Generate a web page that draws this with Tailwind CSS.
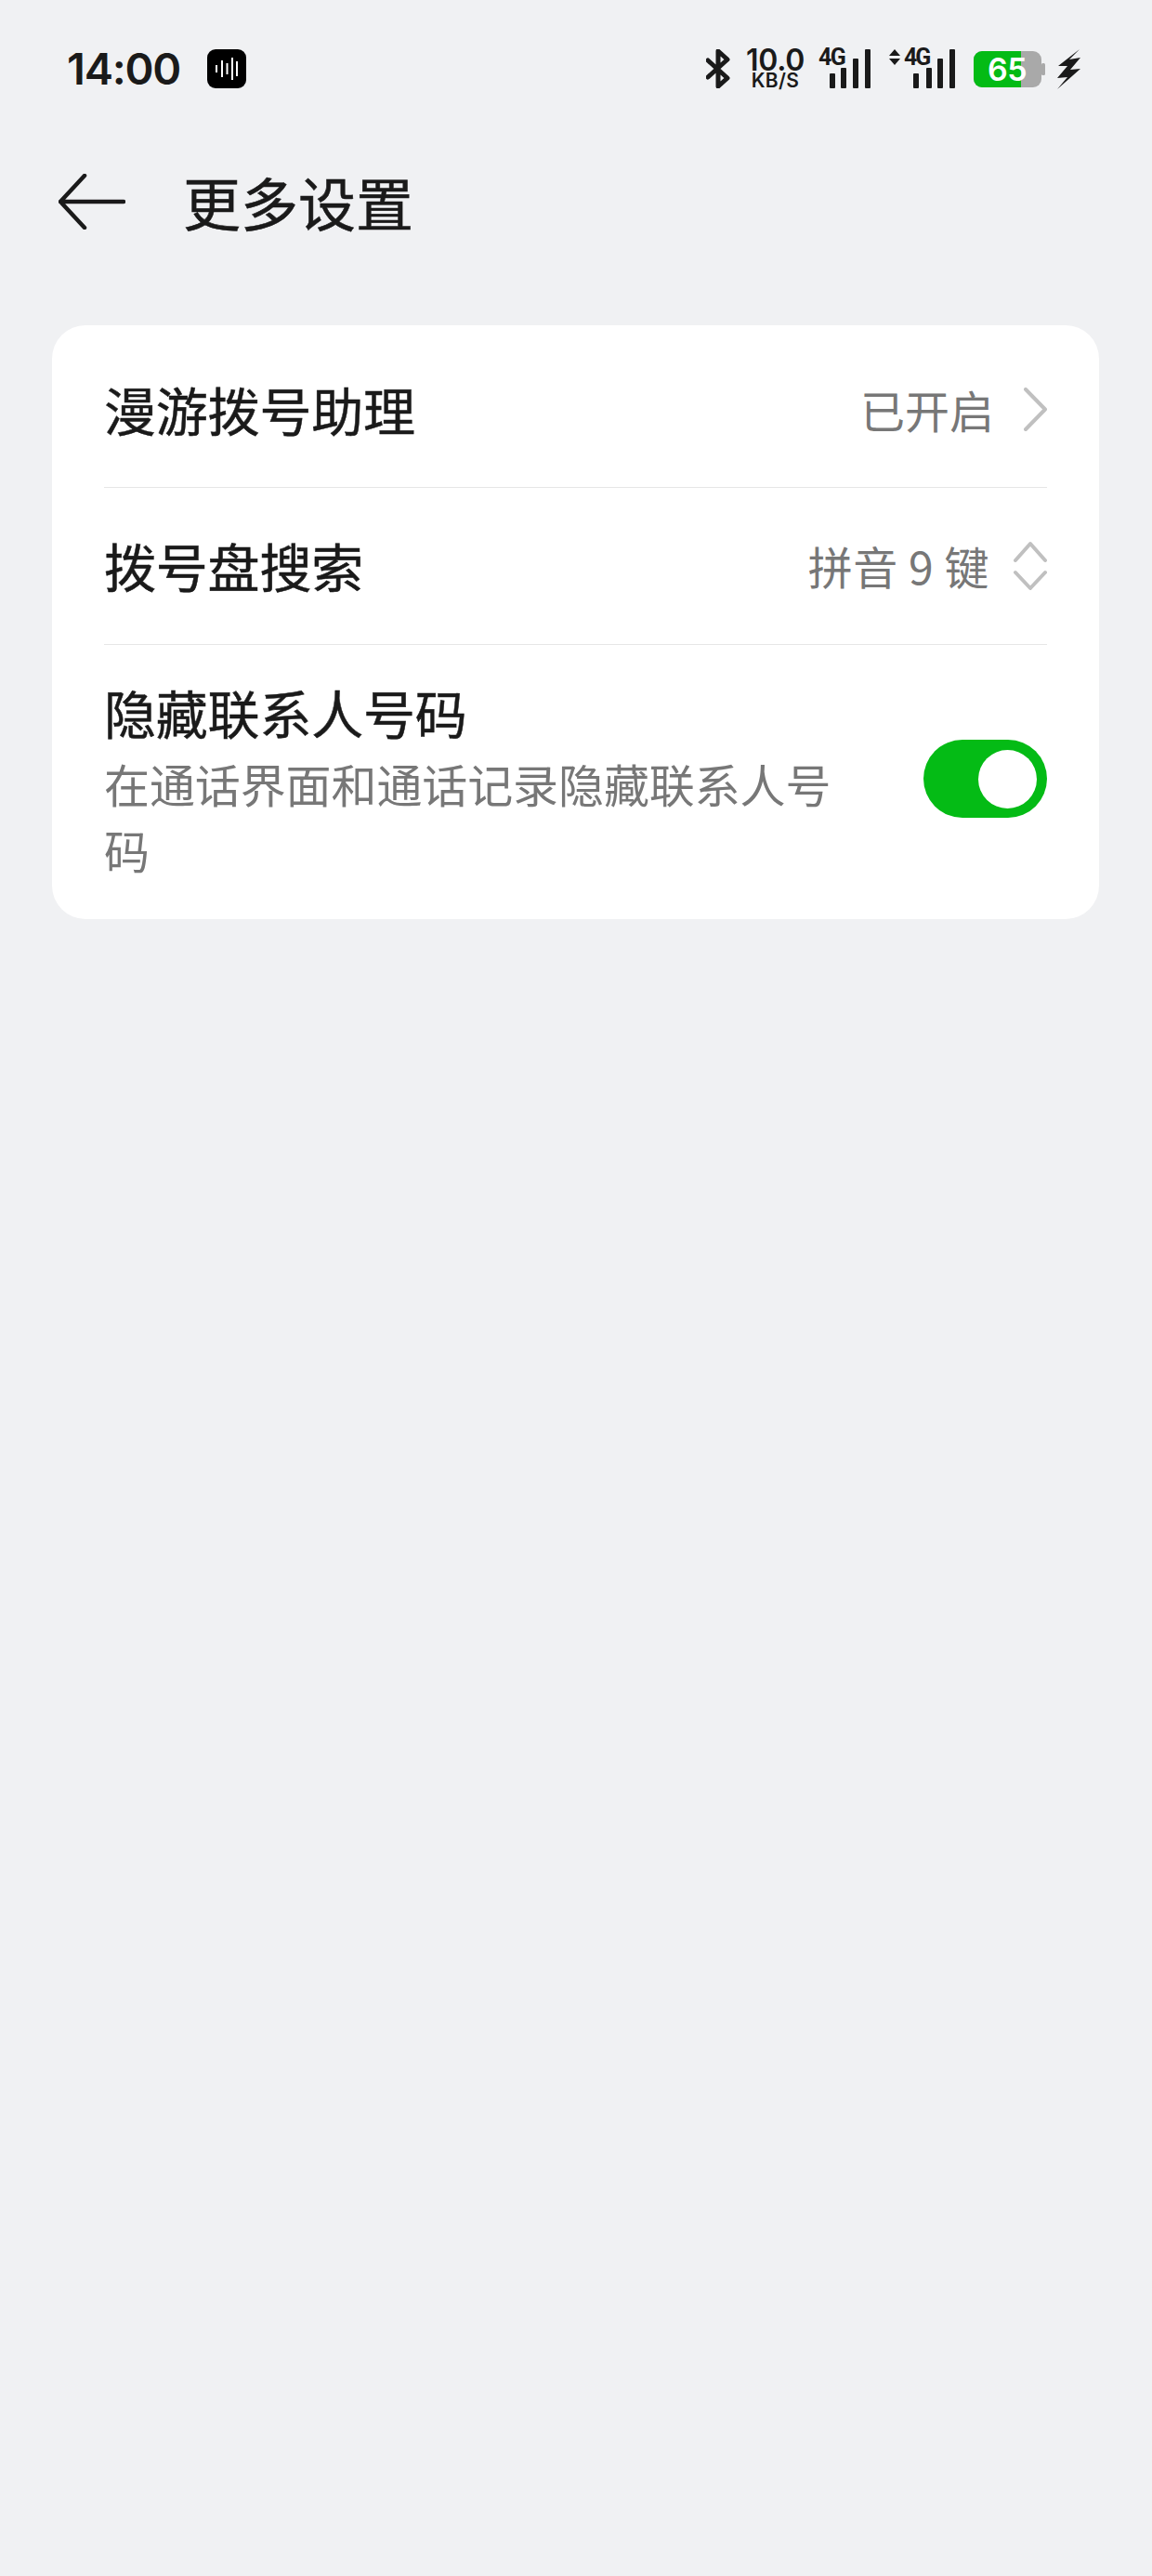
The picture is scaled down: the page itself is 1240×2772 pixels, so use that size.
<!DOCTYPE html>
<html lang="zh-CN">
<head>
<meta charset="utf-8">
<script src="https://cdn.jsdelivr.net/npm/@tailwindcss/browser@4"></script>
</head>
<body class="m-0">
<div class="w-[1240px] h-[2772px] bg-[#f0f1f3] overflow-hidden font-['Noto_Sans_CJK_SC','Noto_Sans',sans-serif] text-[#1a1a1a]">

  <!-- status bar -->
  <div class="flex items-start h-[96px] pt-[53px] pl-[72px]">
    <span class="w-[151px] h-[42px] leading-[42px] text-[47px] font-semibold font-['Inter',sans-serif] tracking-[-1.2px]">14:00</span>
    <svg class="w-[42px] h-[42px]" viewBox="0 0 42 42"><rect width="42" height="42" rx="9" fill="#000"/><path d="M10 17v8M16 12v18M21.500 15v12M27 9v24M32 13v16" stroke="#fff" stroke-width="2" fill="none"/></svg>
    <svg class="ml-[495px] w-[27px] h-[42px]" viewBox="0 0 27 42"><path d="M2 12l21 19-10 9V2l10 9L2 30" fill="none" stroke="#1a1a1a" stroke-width="5" stroke-linejoin="round" stroke-linecap="round"/></svg>
    <div class="ml-[16px] w-[63px] h-[42px] flex flex-col items-center font-['Inter',sans-serif] font-semibold">
      <span class="-mt-[1px] h-[25px] leading-[25px] text-[32px] tracking-[-0.3px] whitespace-nowrap">10.0</span>
      <span class="mt-[1px] h-[17px] leading-[17px] text-[21px] tracking-[0.3px] whitespace-nowrap">KB/S</span>
    </div>
    <div class="relative ml-[15px] w-[56px] h-[42px]">
      <span class="absolute left-0 top-[-3px] leading-[24px] text-[25px] font-bold font-['Roboto',sans-serif] tracking-[-1.5px]">4G</span>
      <svg class="w-[56px] h-[42px]" viewBox="0 0 56 42"><g fill="#1a1a1a"><rect x="12" y="26" width="6" height="16" rx="1"/><rect x="24" y="20" width="6" height="22" rx="1"/><rect x="37" y="10" width="6" height="32" rx="1"/><rect x="50" y="0" width="6" height="42" rx="1"/></g></svg>
    </div>
    <div class="relative ml-[20px] w-[71px] h-[42px]">
      <span class="absolute left-[16px] top-[-3px] leading-[24px] text-[25px] font-bold font-['Roboto',sans-serif] tracking-[-2px]">4G</span>
      <svg class="w-[71px] h-[42px]" viewBox="0 0 71 42"><path d="M0 7l6-7 6 7zM0 10l6 7 6-7z" fill="#1a1a1a"/><g fill="#1a1a1a"><rect x="26" y="26" width="6" height="16" rx="1"/><rect x="40" y="20" width="6" height="22" rx="1"/><rect x="52" y="10" width="6" height="32" rx="1"/><rect x="65" y="0" width="6" height="42" rx="1"/></g></svg>
    </div>
    <div class="relative ml-[20px] mt-[2px] w-[77px] h-[39px]">
      <svg class="w-[77px] h-[39px]" viewBox="0 0 77 39"><rect x="73" y="13" width="4" height="13" rx="1.500" fill="#a9a9a9"/><rect width="73" height="39" rx="9" fill="#a9a9a9"/><path d="M9 0h42v39H9a9 9 0 0 1-9-9V9a9 9 0 0 1 9-9z" fill="#04bb15"/></svg>
      <span class="absolute left-[15px] top-0 h-[39px] leading-[39px] text-[34px] font-semibold text-white font-['Inter',sans-serif] tracking-[-0.5px]">65</span>
    </div>
    <svg class="ml-[13px] w-[25px] h-[43px]" viewBox="0 0 25 43"><path d="M24 0L1 18l10 0L0 31l11-1L0 43l25-22-11 1 11-13-12 2z" fill="#1a1a1a"/></svg>
  </div>

  <!-- header -->
  <div class="flex items-center h-[90px] mt-[76px] pl-[63px]">
    <svg class="w-[72px] h-[60px]" viewBox="0 0 72 60"><path d="M28 2L2 30l26 28M2 30h68" fill="none" stroke="#1a1a1a" stroke-width="4.500" stroke-linecap="round" stroke-linejoin="round"/></svg>
    <h1 class="ml-[62px] text-[62px] leading-[76px] font-normal [-webkit-text-stroke:0.5px_#1a1a1a]">更多设置</h1>
  </div>

  <!-- card -->
  <div class="mt-[88px] mx-[56px] w-[1127px] h-[639px] bg-white rounded-[36px] px-[56px]">
    <div class="h-[175px] pt-[5px] flex items-center justify-between border-b border-[#e6e6e6]">
      <span class="text-[56px] leading-[80px] font-normal tracking-[-0.2px] [-webkit-text-stroke:0.5px_#1a1a1a]">漫游拨号助理</span>
      <div class="flex items-center pt-[2px]">
        <span class="text-[48px] leading-[62px] pb-[2px] text-[#777777]">已开启</span>
        <svg class="ml-[32px] w-[25px] h-[47px]" viewBox="0 0 25 47"><path d="M2 2l21 21.500L2 45" fill="none" stroke="#c0c0c0" stroke-width="4" stroke-linecap="round" stroke-linejoin="round"/></svg>
      </div>
    </div>
    <div class="h-[169px] flex items-center justify-between border-b border-[#e6e6e6]">
      <span class="text-[56px] leading-[78px] pb-[2px] font-normal tracking-[-0.2px] [-webkit-text-stroke:0.5px_#1a1a1a]">拨号盘搜索</span>
      <div class="flex items-center">
        <span class="text-[48px] leading-[62px] pb-[2px] text-[#777777] tracking-[0.5px]">拼音 9 键</span>
        <svg class="ml-[26px] w-[36px] h-[54px]" viewBox="0 0 36 54"><path d="M2 21L18 3l16 18M2 34l16 17 16-17" fill="none" stroke="#c0c0c0" stroke-width="4" stroke-linecap="round" stroke-linejoin="round"/></svg>
      </div>
    </div>
    <div class="h-[295px] flex items-start justify-between pt-[40px]">
      <div class="w-[800px]">
        <div class="text-[56px] leading-[64px] font-normal tracking-[-0.2px] [-webkit-text-stroke:0.5px_#1a1a1a]">隐藏联系人号码</div>
        <div class="mt-[9px] text-[49px] leading-[71px] text-[#777777] tracking-[-0.1px]">在通话界面和通话记录隐藏联系人号码</div>
      </div>
      <div class="mt-[62px] flex items-center justify-end w-[133px] h-[84px] rounded-full bg-[#04bb15] pr-[11px]">
        <div class="w-[63px] h-[63px] rounded-full bg-white"></div>
      </div>
    </div>
  </div>
</div>
</body>
</html>
